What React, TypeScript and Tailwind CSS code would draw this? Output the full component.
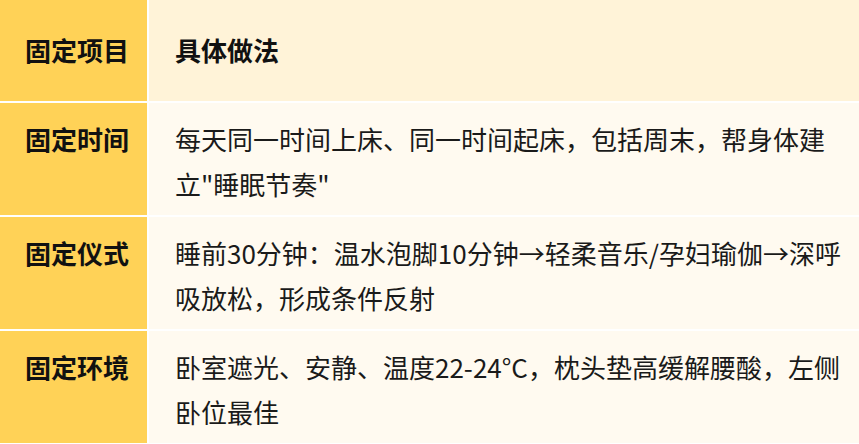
import React from "react";

const rows = [
  { k: "固定时间", v: "每天同一时间上床、同一时间起床，包括周末，帮身体建立\"睡眠节奏\"" },
  { k: "固定仪式", v: "睡前30分钟：温水泡脚10分钟→轻柔音乐/孕妇瑜伽→深呼吸放松，形成条件反射" },
  { k: "固定环境", v: "卧室遮光、安静、温度22-24°C，枕头垫高缓解腰酸，左侧卧位最佳" },
];

export default function App() {
  return (
    <div
      className="w-[859px] h-[444px] overflow-hidden bg-white"
      style={{ fontFamily: '"Noto Sans CJK SC", "Noto Sans", sans-serif' }}
    >
      <div className="grid grid-cols-[147px_1fr] gap-[2px] bg-white text-[26px] leading-[45.5px]">
        <div className="bg-[#FFD257] pl-[25px] pt-[27px] pb-[28px] font-bold text-[#111]">固定项目</div>
        <div className="bg-[#FFF3D8] pl-[26px] pt-[27px] pb-[28px] font-bold text-[#111]">具体做法</div>
        {rows.map((r) => (
          <React.Fragment key={r.k}>
            <div className="bg-[#FFD257] pl-[25px] pt-[13px] pb-[8px] font-bold text-[#111]">{r.k}</div>
            <div className="bg-[#FFFAF0] pl-[26px] pr-[14px] pt-[13px] pb-[8px] text-[#1a1a1a]">{r.v}</div>
          </React.Fragment>
        ))}
      </div>
    </div>
  );
}
